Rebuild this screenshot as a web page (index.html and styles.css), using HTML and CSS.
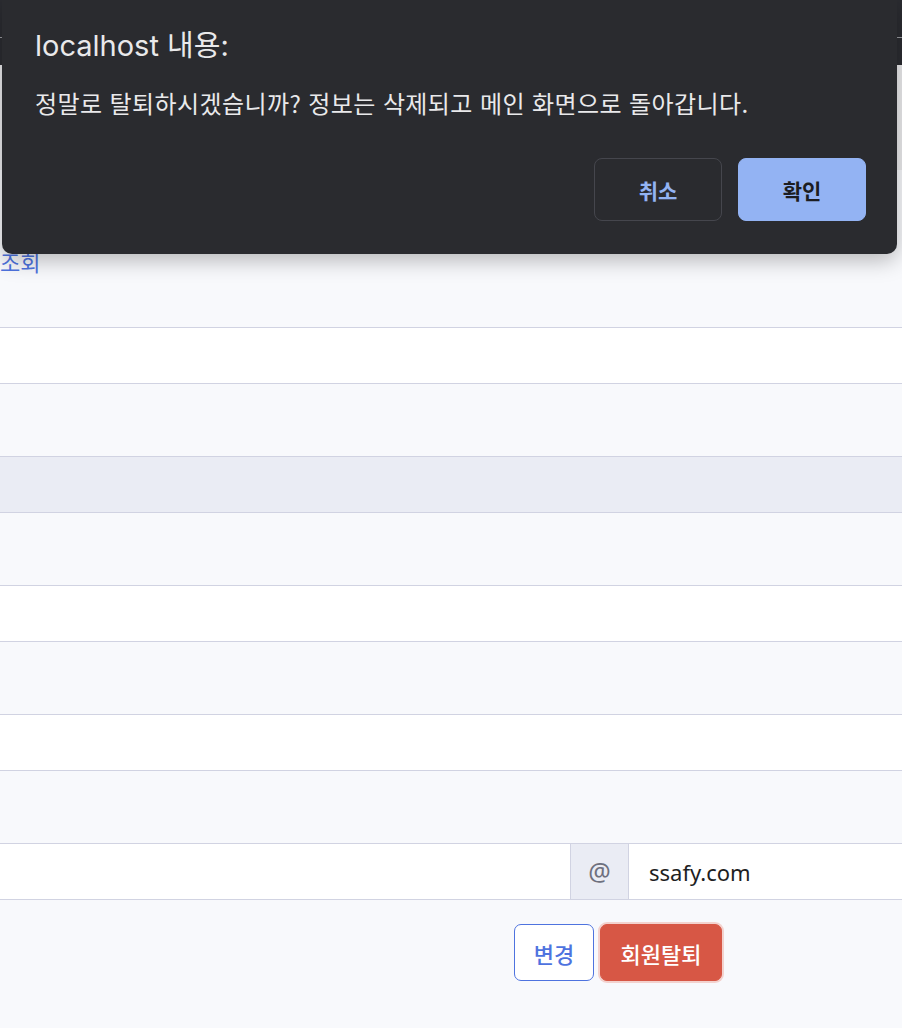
FILE: index.html
```html
<!DOCTYPE html>
<html lang="ko">
<head>
<meta charset="utf-8">
<title>회원정보</title>
<link rel="stylesheet" href="styles.css">
</head>
<body>
<div class="page">
  <header class="nav">
    <div class="nav-top"></div>
    <div class="nav-bottom"></div>
  </header>
  <div class="intro">
    <div class="crumb"></div>
    <a class="link" href="#">조회</a>
  </div>
  <div class="table">
    <div class="row row-white"></div>
    <div class="row row-light tall"></div>
    <div class="row row-head"></div>
    <div class="row row-light tall"></div>
    <div class="row row-white"></div>
    <div class="row row-light tall"></div>
    <div class="row row-white"></div>
    <div class="row row-light tall"></div>
    <div class="row row-white row-input">
      <div class="cell-input"></div>
      <span class="addon">@</span>
      <div class="cell-domain">ssafy.com</div>
    </div>
  </div>
  <div class="actions">
    <button class="btn btn-outline" type="button">변경</button>
    <button class="btn btn-danger" type="button">회원탈퇴</button>
  </div>
</div>

<div class="dialog" role="dialog">
  <div class="dialog-title">localhost 내용:</div>
  <div class="dialog-msg">정말로 탈퇴하시겠습니까? 정보는 삭제되고 메인 화면으로 돌아갑니다.</div>
  <div class="dialog-actions">
    <button class="dbtn dbtn-cancel" type="button">취소</button>
    <button class="dbtn dbtn-ok" type="button">확인</button>
  </div>
</div>
</body>
</html>
```

FILE: styles.css
```css
* { box-sizing: border-box; }

html, body {
  margin: 0;
  padding: 0;
}

body {
  width: 902px;
  height: 1028px;
  overflow: hidden;
  background: #f8f9fc;
  font-family: "Noto Sans", "Noto Sans CJK KR", sans-serif;
  position: relative;
}

.page {
  display: flex;
  flex-direction: column;
  height: 1028px;
  background: #f8f9fc;
}

.nav {
  height: 65px;
  display: flex;
  flex-direction: column;
  background: #2b2c31;
}
.nav-top {
  height: 38px;
  border-bottom: 1px solid #9a9ba0;
}
.nav-bottom {
  flex: 1;
}

.intro {
  height: 262px;
  display: flex;
  flex-direction: column;
  align-items: flex-start;
}
.crumb {
  height: 105px;
  width: 100%;
  background: #ececee;
}
.link {
  margin-top: 78px;
  font-size: 22px;
  line-height: 26px;
  color: #4e73df;
  text-decoration: none;
  font-family: "Noto Sans CJK KR", sans-serif;
}

.table {
  display: flex;
  flex-direction: column;
}
.row {
  height: 56px;
  border-top: 1px solid #d1d3e2;
}
.row.tall { height: 73px; }
.row-white { background: #ffffff; }
.row-light { background: #f8f9fc; }
.row-head { background: #eaecf4; }

.row-input {
  height: 57px;
  border-bottom: 1px solid #d1d3e2;
  display: flex;
}
.cell-input {
  width: 570px;
  background: #ffffff;
}
.addon {
  width: 59px;
  background: #eaecf4;
  border-left: 1px solid #d1d3e2;
  border-right: 1px solid #d1d3e2;
  display: flex;
  align-items: center;
  justify-content: center;
  color: #6e707e;
  font-size: 25px;
  padding-bottom: 2px;
}
.cell-domain {
  flex: 1;
  display: flex;
  align-items: center;
  padding-left: 20px;
  font-size: 22px;
  color: #1e1e22;
  background: #ffffff;
}

.actions {
  display: flex;
  gap: 6px;
  padding-top: 24px;
  padding-left: 514px;
}
.btn {
  height: 57px;
  padding: 0 17px;
  border-radius: 7px;
  font-size: 22px;
  font-family: "Noto Sans CJK KR", sans-serif;
  font-weight: 500;
  cursor: pointer;
}
.btn-outline {
  width: 80px;
  background: #ffffff;
  color: #4e73df;
  border: 1px solid #4e73df;
}
.btn-danger {
  background: #d75745;
  color: #ffffff;
  border: 1px solid #d75745;
  box-shadow: 0 0 0 2px #f3d2ce;
  width: 122px;
}

.dialog {
  position: absolute;
  top: 0;
  left: 2px;
  width: 895px;
  height: 254px;
  background: #2a2b2f;
  border-radius: 0 0 10px 10px;
  box-shadow: 0 6px 22px rgba(0, 0, 0, 0.28);
  padding: 28px 31px 0 33px;
  font-family: "Inter", "Noto Sans CJK KR", sans-serif;
  color: #e9e9eb;
}
.dialog-title {
  font-size: 29px;
  line-height: 36px;
}
.dialog-msg {
  margin-top: 24px;
  font-size: 24px;
  letter-spacing: 0.4px;
  line-height: 30px;
  font-family: "Noto Sans CJK KR", sans-serif;
}
.dialog-actions {
  margin-top: 40px;
  display: flex;
  justify-content: flex-end;
  gap: 16px;
}
.dbtn {
  width: 128px;
  height: 63px;
  border-radius: 8px;
  font-size: 21px;
  font-weight: 700;
  font-family: "Noto Sans CJK KR", sans-serif;
  cursor: pointer;
}
.dbtn-cancel {
  background: transparent;
  border: 1px solid #45464d;
  color: #93b3f3;
}
.dbtn-ok {
  background: #93b3f3;
  border: 1px solid #93b3f3;
  color: #1c1d21;
}
```
